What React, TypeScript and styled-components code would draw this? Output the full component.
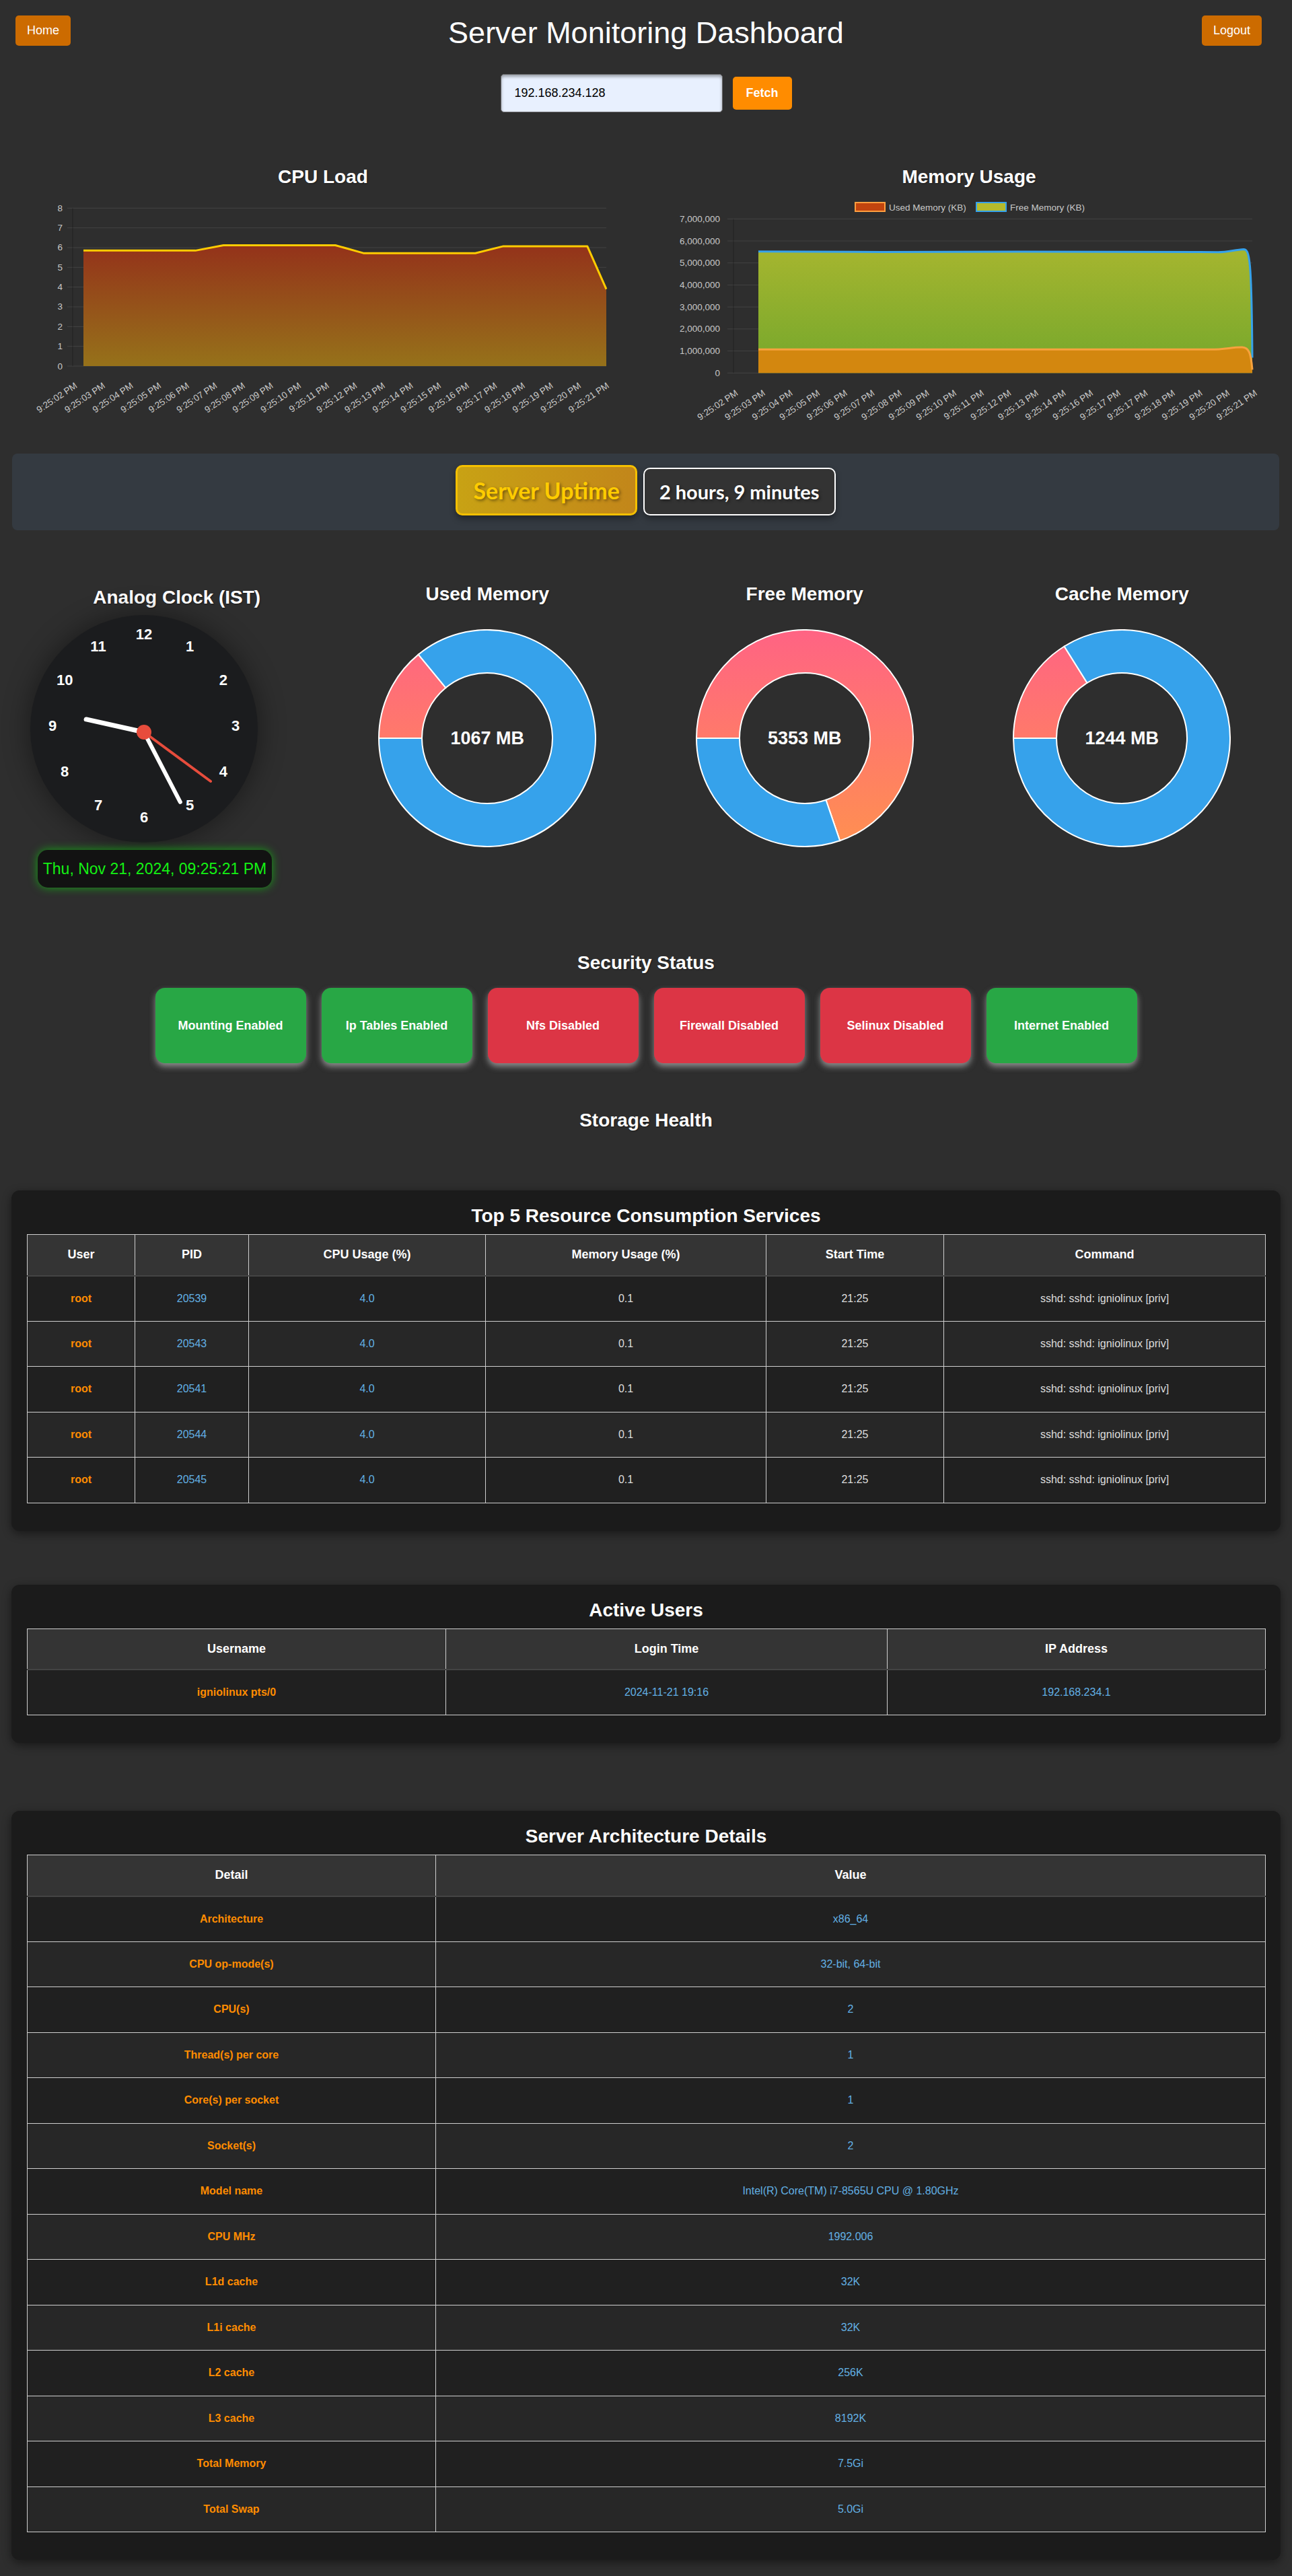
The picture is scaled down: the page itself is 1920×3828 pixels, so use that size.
import React from 'react';
import styled, { createGlobalStyle } from 'styled-components';

// ------------------------------------------------------------------------------------------------
// data

const CPU_LABELS = Array.from({ length: 20 }, (_, i) => `9:25:${String(i + 2).padStart(2, '0')} PM`);
const CPU_VALUES = [5.85, 5.85, 5.85, 5.85, 5.85, 6.12, 6.12, 6.12, 6.12, 6.12, 5.72, 5.72, 5.72, 5.72, 5.72, 6.07, 6.07, 6.07, 6.07, 3.9];

const MEM_LABELS = [
  '9:25:02 PM', '9:25:03 PM', '9:25:04 PM', '9:25:05 PM', '9:25:06 PM', '9:25:07 PM', '9:25:08 PM',
  '9:25:09 PM', '9:25:10 PM', '9:25:11 PM', '9:25:12 PM', '9:25:13 PM', '9:25:14 PM', '9:25:16 PM',
  '9:25:17 PM', '9:25:17 PM', '9:25:18 PM', '9:25:19 PM', '9:25:20 PM', '9:25:21 PM',
];

const SECURITY = [
  { label: 'Mounting Enabled', ok: true },
  { label: 'Ip Tables Enabled', ok: true },
  { label: 'Nfs Disabled', ok: false },
  { label: 'Firewall Disabled', ok: false },
  { label: 'Selinux Disabled', ok: false },
  { label: 'Internet Enabled', ok: true },
];

type Tone = 'key' | 'accent' | 'plain';

const TOP_PROCESSES = [20539, 20543, 20541, 20544, 20545].map(pid => [
  'root', String(pid), '4.0', '0.1', '21:25', 'sshd: sshd: igniolinux [priv]',
]);

const ARCH_ROWS = [
  ['Architecture', 'x86_64'],
  ['CPU op-mode(s)', '32-bit, 64-bit'],
  ['CPU(s)', '2'],
  ['Thread(s) per core', '1'],
  ['Core(s) per socket', '1'],
  ['Socket(s)', '2'],
  ['Model name', 'Intel(R) Core(TM) i7-8565U CPU @ 1.80GHz'],
  ['CPU MHz', '1992.006'],
  ['L1d cache', '32K'],
  ['L1i cache', '32K'],
  ['L2 cache', '256K'],
  ['L3 cache', '8192K'],
  ['Total Memory', '7.5Gi'],
  ['Total Swap', '5.0Gi'],
];

const FONT = 'Liberation Sans, Arial, sans-serif';

// ------------------------------------------------------------------------------------------------
// geometry helpers

const polar = (cx: number, cy: number, r: number, deg: number): [number, number] => {
  const a = (deg * Math.PI) / 180;
  return [cx + r * Math.sin(a), cy - r * Math.cos(a)];
};

const ringSegment = (cx: number, cy: number, R: number, r: number, a0: number, a1: number) => {
  const [x0, y0] = polar(cx, cy, R, a0);
  const [x1, y1] = polar(cx, cy, R, a1);
  const [x2, y2] = polar(cx, cy, r, a1);
  const [x3, y3] = polar(cx, cy, r, a0);
  const large = a1 - a0 > 180 ? 1 : 0;
  return `M${x0} ${y0} A${R} ${R} 0 ${large} 1 ${x1} ${y1} L${x2} ${y2} A${r} ${r} 0 ${large} 0 ${x3} ${y3} Z`;
};

// ------------------------------------------------------------------------------------------------
// charts

const TickLabel: React.FC<{ x: number; y: number; text: string }> = ({ x, y, text }) => (
  <text
    x={x + 5.6}
    y={y + 8.3}
    transform={`rotate(-34 ${x + 5.6} ${y + 8.3})`}
    textAnchor="end"
    fontSize={13.5}
    fill="#c8c8c8"
    fontFamily={FONT}>
    {text}
  </text>
);

const CpuChart = () => {
  const y = (v: number) => 259 - 29.34 * v;
  const pts = CPU_VALUES.map((v, i) => [i === 19 ? 851 : 74 + 41.6 * i, y(v)]);
  const line = 'M' + pts.map(p => p.join(' ')).join(' L');
  const area = `${line} L851 ${y(0)} L74 ${y(0)} Z`;

  return (
    <svg width={860} height={370}>
      <defs>
        <linearGradient id="cpuFill" x1="0" y1="79" x2="0" y2="259" gradientUnits="userSpaceOnUse">
          <stop offset="0" stopColor="#94321a" />
          <stop offset="1" stopColor="#96721a" />
        </linearGradient>
      </defs>
      {Array.from({ length: 9 }, (_, v) => (
        <g key={v}>
          <line x1={50} x2={851} y1={y(v)} y2={y(v)} stroke="rgba(255,255,255,0.1)" />
          <text x={43} y={y(v) + 4.5} textAnchor="end" fontSize={13.5} fill="#c8c8c8" fontFamily={FONT}>
            {v}
          </text>
        </g>
      ))}
      <line x1={58} x2={58} y1={y(8)} y2={y(0)} stroke="rgba(0,0,0,0.3)" />
      <path d={area} fill="url(#cpuFill)" />
      <path d={line} fill="none" stroke="#ffcc00" strokeWidth={3} strokeLinejoin="round" />
      {CPU_LABELS.map((l, i) => (
        <TickLabel key={l} x={60 + 41.6 * i} y={282} text={l} />
      ))}
    </svg>
  );
};

const MemoryChart = () => {
  const y = (m: number) => 269.3 - 32.71 * m;
  const free =
    `M117 ${y(5.52)} L300 ${y(5.5)} L500 ${y(5.51)} L773 ${y(5.5)} L800 ${y(5.49)} ` +
    `C815 ${y(5.49)} 825 ${y(5.6)} 838 ${y(5.62)} C847 ${y(5.62)} 850 ${y(5.2)} 851 ${y(0.7)}`;
  const used =
    `M117 ${y(1.07)} L790 ${y(1.07)} C810 ${y(1.07)} 822 ${y(1.18)} 836 ${y(1.17)} ` +
    `C846 ${y(1.16)} 849 ${y(0.9)} 851 ${y(0.15)}`;
  const close = ` L851 ${y(0)} L117 ${y(0)} Z`;

  return (
    <svg width={860} height={370}>
      <defs>
        <linearGradient id="freeFill" x1="0" y1="90" x2="0" y2="269" gradientUnits="userSpaceOnUse">
          <stop offset="0" stopColor="#a4b52f" />
          <stop offset="1" stopColor="#74a72c" />
        </linearGradient>
      </defs>
      <rect x={261} y={16} width={44} height={13} fill="#c1440e" stroke="#ff9f40" strokeWidth={2} />
      <text x={311} y={28} fontSize={13.5} fill="#c8c8c8" fontFamily={FONT}>
        Used Memory (KB)
      </text>
      <rect x={441} y={16} width={44} height={13} fill="#b5bb2c" stroke="#36a2eb" strokeWidth={2} />
      <text x={491} y={28} fontSize={13.5} fill="#c8c8c8" fontFamily={FONT}>
        Free Memory (KB)
      </text>
      {Array.from({ length: 8 }, (_, m) => (
        <g key={m}>
          <line x1={71} x2={851} y1={y(m)} y2={y(m)} stroke="rgba(255,255,255,0.1)" />
          <text x={60} y={y(m) + 4.5} textAnchor="end" fontSize={13.5} fill="#c8c8c8" fontFamily={FONT}>
            {m === 0 ? '0' : `${m},000,000`}
          </text>
        </g>
      ))}
      <line x1={80} x2={80} y1={y(7)} y2={y(0)} stroke="rgba(0,0,0,0.3)" />
      <path d={free + close} fill="url(#freeFill)" />
      <path d={used + close} fill="#d3870f" />
      <path d={free} fill="none" stroke="#36a2eb" strokeWidth={3} />
      <path d={used} fill="none" stroke="#f7a23e" strokeWidth={3} />
      {MEM_LABELS.map((l, i) => (
        <TickLabel key={i} x={82 + 40.6 * i} y={293} text={l} />
      ))}
    </svg>
  );
};

// ------------------------------------------------------------------------------------------------
// clock + donuts

const Clock = () => {
  const pivot: [number, number] = [169, 174];
  const hand = (deg: number, len: number) => polar(pivot[0], pivot[1], len, deg);
  const [hx, hy] = hand(282.5, 88);
  const [mx, my] = hand(152.6, 117);
  const [sx, sy] = hand(126.4, 123);

  return (
    <ClockFace>
      <svg width={338} height={338}>
        {Array.from({ length: 12 }, (_, i) => {
          const [x, yy] = polar(169, 164, 136, (i + 1) * 30);
          return (
            <text key={i} x={x} y={yy + 8} textAnchor="middle" fontSize={22} fontWeight="bold" fill="#fff" fontFamily={FONT}>
              {i + 1}
            </text>
          );
        })}
        <line x1={pivot[0]} y1={pivot[1]} x2={hx} y2={hy} stroke="#fff" strokeWidth={7} strokeLinecap="round" />
        <line x1={pivot[0]} y1={pivot[1]} x2={mx} y2={my} stroke="#fff" strokeWidth={6} strokeLinecap="round" />
        <line x1={pivot[0]} y1={pivot[1]} x2={sx} y2={sy} stroke="#e74c3c" strokeWidth={4} strokeLinecap="round" />
        <circle cx={pivot[0]} cy={pivot[1]} r={11} fill="#e74c3c" />
      </svg>
    </ClockFace>
  );
};

const Donut: React.FC<{ id: string; share: number; value: string }> = ({ id, share, value }) => {
  const split = 270 + 360 * share;
  return (
    <DonutWrap>
      <svg width={324} height={324}>
        <defs>
          <linearGradient id={id} x1="0" y1="0" x2="0" y2="324" gradientUnits="userSpaceOnUse">
            <stop offset="0" stopColor="#ff6384" />
            <stop offset="1" stopColor="#ff9050" />
          </linearGradient>
        </defs>
        <path d={ringSegment(162, 162, 161, 97, 270, split)} fill={`url(#${id})`} stroke="#fff" strokeWidth={2} />
        <path d={ringSegment(162, 162, 161, 97, split, 630)} fill="#36a2eb" stroke="#fff" strokeWidth={2} />
      </svg>
      <DonutValue>{value}</DonutValue>
    </DonutWrap>
  );
};

// ------------------------------------------------------------------------------------------------
// tables

type DataTableProps = {
  columns: string[];
  widths: number[];
  tones: Tone[];
  rows: string[][];
};

const DataTable: React.FC<DataTableProps> = ({ columns, widths, tones, rows }) => (
  <Table>
    <colgroup>
      {widths.map((w, i) => (
        <col key={i} style={{ width: w }} />
      ))}
    </colgroup>
    <thead>
      <tr>
        {columns.map(c => (
          <HeadCell key={c}>{c}</HeadCell>
        ))}
      </tr>
    </thead>
    <tbody>
      {rows.map((r, ri) => (
        <BodyRow key={ri}>
          {r.map((c, ci) => (
            <Cell key={ci} $tone={tones[ci]}>
              {c}
            </Cell>
          ))}
        </BodyRow>
      ))}
    </tbody>
  </Table>
);

// ------------------------------------------------------------------------------------------------

export default function App() {
  return (
    <>
      <GlobalStyle />
      <Page>
        <TopBar>
          <NavButton $side="left">Home</NavButton>
          <PageTitle>Server Monitoring Dashboard</PageTitle>
          <NavButton $side="right">Logout</NavButton>
        </TopBar>

        <FetchRow>
          <IpInput defaultValue="192.168.234.128" />
          <FetchButton>Fetch</FetchButton>
        </FetchRow>

        <ChartsRow>
          <ChartColumn>
            <SectionTitle>CPU Load</SectionTitle>
            <CpuChart />
          </ChartColumn>
          <ChartColumn>
            <SectionTitle>Memory Usage</SectionTitle>
            <MemoryChart />
          </ChartColumn>
        </ChartsRow>

        <UptimePanel>
          <UptimeLabel>Server Uptime</UptimeLabel>
          <UptimeValue>2 hours, 9 minutes</UptimeValue>
        </UptimePanel>

        <StatsRow>
          <ClockColumn>
            <ClockTitle>Analog Clock (IST)</ClockTitle>
            <Clock />
            <DateBadge>Thu, Nov 21, 2024, 09:25:21 PM</DateBadge>
          </ClockColumn>
          <StatsColumn>
            <SectionTitle>Used Memory</SectionTitle>
            <Donut id="usedGrad" share={0.1405} value="1067 MB" />
          </StatsColumn>
          <StatsColumn>
            <SectionTitle>Free Memory</SectionTitle>
            <Donut id="freeGrad" share={0.6975} value="5353 MB" />
          </StatsColumn>
          <StatsColumn>
            <SectionTitle>Cache Memory</SectionTitle>
            <Donut id="cacheGrad" share={0.161} value="1244 MB" />
          </StatsColumn>
        </StatsRow>

        <Section $mt={96}>
          <SectionTitle>Security Status</SectionTitle>
          <StatusGrid>
            {SECURITY.map(s => (
              <StatusCard key={s.label} $ok={s.ok}>
                {s.label}
              </StatusCard>
            ))}
          </StatusGrid>
        </Section>

        <Section $mt={69}>
          <SectionTitle>Storage Health</SectionTitle>
        </Section>

        <Card $mt={88}>
          <CardTitle>Top 5 Resource Consumption Services</CardTitle>
          <DataTable
            columns={['User', 'PID', 'CPU Usage (%)', 'Memory Usage (%)', 'Start Time', 'Command']}
            widths={[160, 169, 352, 417, 264, 478]}
            tones={['key', 'accent', 'accent', 'plain', 'plain', 'plain']}
            rows={TOP_PROCESSES}
          />
        </Card>

        <Card $mt={80}>
          <CardTitle>Active Users</CardTitle>
          <DataTable
            columns={['Username', 'Login Time', 'IP Address']}
            widths={[622, 656, 562]}
            tones={['key', 'accent', 'accent']}
            rows={[['igniolinux pts/0', '2024-11-21 19:16', '192.168.234.1']]}
          />
        </Card>

        <Card $mt={101}>
          <CardTitle>Server Architecture Details</CardTitle>
          <DataTable columns={['Detail', 'Value']} widths={[607, 1233]} tones={['key', 'accent']} rows={ARCH_ROWS} />
        </Card>
      </Page>
    </>
  );
}

// ------------------------------------------------------------------------------------------------
// styles

const GlobalStyle = createGlobalStyle`
  html, body {
    margin: 0;
    padding: 0;
    background: #2e2e2e;
  }
  body {
    font-family: 'Liberation Sans', Arial, sans-serif;
    color: #fff;
  }
  * { box-sizing: border-box; }
`;

const Page = styled.div`
  padding: 0 17px 23px;
`;

const TopBar = styled.header`
  display: grid;
  grid-template-columns: 1fr auto 1fr;
  align-items: start;
  padding-top: 23px;
`;

const NavButton = styled.button<{ $side: 'left' | 'right' }>`
  justify-self: ${({ $side }) => ($side === 'left' ? 'start' : 'end')};
  margin: ${({ $side }) => ($side === 'left' ? '0 0 0 6px' : '0 28px 0 0')};
  height: 45px;
  padding: 0 17px;
  border: none;
  border-radius: 5px;
  background: #cc6b00;
  color: #fff;
  font-family: 'Liberation Sans', Arial, sans-serif;
  font-size: 18px;
`;

const PageTitle = styled.h1`
  margin: 0;
  font-size: 45px;
  line-height: 52px;
  font-weight: normal;
  color: #fff;
`;

const FetchRow = styled.div`
  display: flex;
  justify-content: center;
  align-items: center;
  gap: 15px;
  margin-top: 35px;
`;

const IpInput = styled.input`
  width: 330px;
  height: 57px;
  padding: 0 0 0 20px;
  border: 1px solid #666;
  border-radius: 5px;
  background: #e8f0fe;
  box-shadow: inset 0 3px 4px rgba(0, 0, 0, 0.35);
  font-family: 'Liberation Sans', Arial, sans-serif;
  font-size: 18px;
  color: #000;
`;

const FetchButton = styled.button`
  width: 88px;
  height: 49px;
  border: none;
  border-radius: 5px;
  background: #ff8c00;
  color: #fff;
  font-family: 'Liberation Sans', Arial, sans-serif;
  font-size: 18px;
  font-weight: bold;
`;

const ChartsRow = styled.div`
  display: flex;
  margin: 80px -17px 0;
`;

const ChartColumn = styled.div`
  flex: 1;
  display: flex;
  flex-direction: column;
  align-items: center;
  gap: 6px;
`;

const SectionTitle = styled.h2`
  margin: 0;
  font-size: 28px;
  line-height: 32px;
  font-weight: bold;
  color: #fff;
  text-align: center;
  text-shadow: 1px 1px 2px rgba(0, 0, 0, 0.4);
`;

const UptimePanel = styled.div`
  display: flex;
  justify-content: center;
  align-items: flex-end;
  gap: 9px;
  height: 114px;
  margin: 19px 2px 0 1px;
  padding-bottom: 22px;
  border-radius: 8px;
  background: #343a41;
`;

const UptimeLabel = styled.div`
  display: flex;
  align-items: center;
  height: 75px;
  padding: 0 23px;
  border: 3px solid #f5c000;
  border-radius: 10px;
  background: linear-gradient(90deg, #c8a214, #c2861a);
  color: #ffcc00;
  font-family: Lato, 'Open Sans', sans-serif;
  font-size: 34px;
  font-weight: bold;
  text-shadow: 2px 2px 4px rgba(0, 0, 0, 0.45);
  box-shadow: 0 5px 10px rgba(0, 0, 0, 0.35);
`;

const UptimeValue = styled.div`
  display: flex;
  align-items: center;
  height: 71px;
  padding: 0 22px;
  border: 2px solid #fff;
  border-radius: 10px;
  background: #333;
  color: #fff;
  font-family: Lato, 'Open Sans', sans-serif;
  font-size: 29px;
  font-weight: bold;
  text-shadow: 2px 2px 4px rgba(0, 0, 0, 0.45);
  box-shadow: 0 5px 10px rgba(0, 0, 0, 0.35);
`;

const StatsRow = styled.div`
  display: flex;
  align-items: flex-start;
  margin-top: 79px;
`;

const StatsColumn = styled.div`
  flex: 1;
  display: flex;
  flex-direction: column;
  align-items: center;
  gap: 36px;
`;

const ClockColumn = styled.div`
  flex: 1;
  display: flex;
  flex-direction: column;
  align-items: flex-start;
`;

const ClockTitle = styled.h2`
  align-self: stretch;
  margin: 5px 0 0;
  padding-left: 20px;
  font-size: 28px;
  line-height: 32px;
  font-weight: bold;
  text-align: center;
  color: #fff;
  text-shadow: 1px 1px 2px rgba(0, 0, 0, 0.4);
`;

const ClockFace = styled.div`
  width: 338px;
  height: 338px;
  margin: 10px 0 0 28px;
  border-radius: 50%;
  background: #1b1c1e;
  box-shadow: 0 0 40px rgba(0, 0, 0, 0.45);
`;

const DateBadge = styled.div`
  display: flex;
  align-items: center;
  justify-content: center;
  width: 348px;
  height: 56px;
  margin: 11px 0 0 39px;
  border-radius: 15px;
  background: #121212;
  box-shadow: 0 0 14px rgba(0, 255, 0, 0.55);
  color: #14f014;
  font-size: 23px;
`;

const DonutWrap = styled.div`
  position: relative;
  width: 324px;
  height: 324px;
`;

const DonutValue = styled.div`
  position: absolute;
  inset: 0;
  display: flex;
  align-items: center;
  justify-content: center;
  font-size: 27px;
  font-weight: bold;
  color: #fff;
`;

const Section = styled.section<{ $mt: number }>`
  margin-top: ${({ $mt }) => $mt}px;
`;

const StatusGrid = styled.div`
  display: flex;
  justify-content: center;
  gap: 23px;
  margin-top: 21px;
`;

const StatusCard = styled.div<{ $ok: boolean }>`
  display: flex;
  align-items: center;
  justify-content: center;
  width: 224px;
  height: 112px;
  border-radius: 14px;
  background: ${({ $ok }) => ($ok ? '#28a745' : '#dc3545')};
  box-shadow: 0 5px 10px rgba(220, 220, 220, 0.55);
  color: #fff;
  font-size: 18px;
  font-weight: bold;
`;

const Card = styled.div<{ $mt: number }>`
  margin-top: ${({ $mt }) => $mt}px;
  padding: 22px 23px 41px;
  border-radius: 12px;
  background: #1b1b1b;
  box-shadow: 0 4px 14px rgba(0, 0, 0, 0.45);
`;

const CardTitle = styled.h2`
  margin: 0 0 11px;
  font-size: 28px;
  line-height: 32px;
  font-weight: bold;
  text-align: center;
  color: #fff;
`;

const Table = styled.table`
  width: 100%;
  border-collapse: collapse;
  table-layout: fixed;
`;

const HeadCell = styled.th`
  height: 61px;
  padding: 0 8px;
  border: 1px solid #cfcfcf;
  border-bottom: 2px solid #444;
  background: #343434;
  color: #fff;
  font-size: 18px;
  font-weight: bold;
  text-align: center;
`;

const BodyRow = styled.tr`
  background: #202020;
  &:nth-child(even) {
    background: #272727;
  }
`;

const toneColor: Record<Tone, string> = {
  key: '#ff8c00',
  accent: '#62b0e4',
  plain: '#dddddd',
};

const Cell = styled.td<{ $tone: Tone }>`
  height: 67.5px;
  padding: 0 8px;
  border: 1px solid #cfcfcf;
  text-align: center;
  font-size: 16px;
  font-weight: ${({ $tone }) => ($tone === 'key' ? 'bold' : 'normal')};
  color: ${({ $tone }) => toneColor[$tone]};
`;
